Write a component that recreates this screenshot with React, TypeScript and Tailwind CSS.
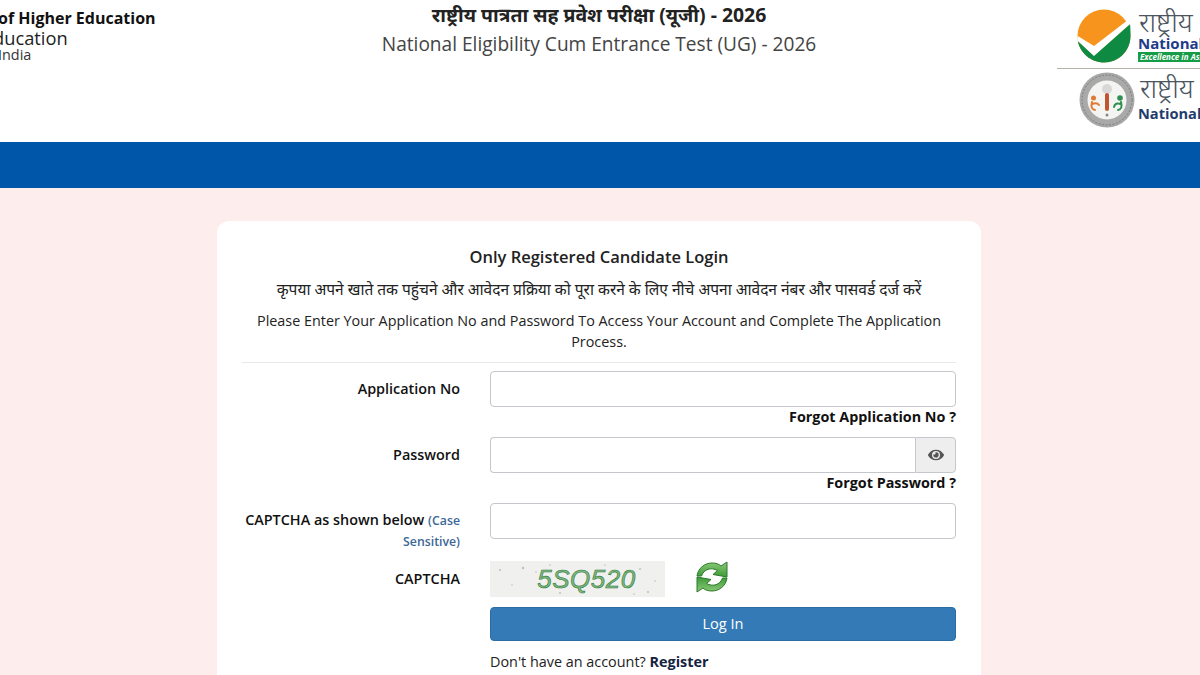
import React from "react";
import { FaEye } from "react-icons/fa";

const font = { fontFamily: '"Open Sans", "Noto Sans", "Noto Sans Devanagari", "Lohit Devanagari", sans-serif' };

function NtaLogo() {
  return (
    <svg width="54" height="54" viewBox="0 0 54 54" className="shrink-0">
      <circle cx="27" cy="27" r="26.5" fill="#f7941d" />
      <path d="M0.8 32 L17 46.500 L53 15 C53.500 18 53.500 24 53.500 27 C53.500 41.500 42 53.500 27 53.500 C14 53.500 3 44 0.800 32 Z" fill="#0e8a43" />
      <path d="M0.800 27 L17 37 L51.500 10.500 L53 15 L17 47 L0.800 32 Z" fill="#fff" />
    </svg>
  );
}

function NmcLogo() {
  return (
    <svg width="56" height="56" viewBox="0 0 56 56" className="shrink-0">
      <circle cx="28" cy="28" r="27.5" fill="#a9a9a9" />
      <circle cx="28" cy="28" r="25" fill="none" stroke="#7c7c7c" strokeWidth="1" strokeDasharray="2 1.500" />
      <circle cx="28" cy="28" r="19.500" fill="#f4f4f2" />
      <circle cx="28" cy="17" r="5" fill="#d8d8d8" />
      <path d="M28 23 v14" stroke="#c2552f" strokeWidth="4" strokeLinecap="round" />
      <circle cx="14.500" cy="26" r="2.500" fill="#e07a30" />
      <path d="M13 30 q-2 7 3 8 M13 32 q5-2 7 1" fill="none" stroke="#e07a30" strokeWidth="2" strokeLinecap="round" />
      <circle cx="41" cy="26" r="2.800" fill="#2f8f4e" />
      <path d="M42 30 q2 7-3 8 M42 32 q-6-2-7 3" fill="none" stroke="#2f8f4e" strokeWidth="2" strokeLinecap="round" />
      <circle cx="28" cy="43" r="1.500" fill="#888" />
    </svg>
  );
}

function Refresh() {
  const arrow = "M2 15 C3 7 10 2 17 2 C21 2 24 3 26 5 L32 1 L32 16 L18 13.500 L22.500 9.500 C16 6 9 8 6.500 15 Z";
  return (
    <svg width="34" height="32" viewBox="0 0 34 32">
      <defs>
        <linearGradient id="refreshGreen" x1="0" y1="0" x2="0" y2="1">
          <stop offset="0" stopColor="#8cc97a" />
          <stop offset="1" stopColor="#3c9a35" />
        </linearGradient>
      </defs>
      <path d={arrow} fill="url(#refreshGreen)" stroke="#2a7a2a" strokeWidth="1" strokeLinejoin="round" />
      <path d={arrow} transform="rotate(180 17 16)" fill="url(#refreshGreen)" stroke="#2a7a2a" strokeWidth="1" strokeLinejoin="round" />
    </svg>
  );
}

function Row({ label, children, small }: { label: React.ReactNode; children: React.ReactNode; small?: boolean }) {
  return (
    <div className="flex">
      <div className={`w-[218px] shrink-0 pt-[7px] text-right text-[14.4px] font-semibold text-[#111] ${small ? "leading-[20px]" : "leading-[21px]"}`}>{label}</div>
      <div className="ml-[30px] flex-1">{children}</div>
    </div>
  );
}

const inputCls = "block h-[36px] w-full rounded-[4px] border border-[#c4c7cb] bg-white";

export default function App() {
  return (
    <div style={font} className="h-[675px] w-[1200px] overflow-hidden bg-[#fdeded]">
      <header className="flex h-[142px] bg-white">
        <div className="w-[155px] shrink-0 whitespace-nowrap pt-[8px]">
          <div className="-ml-[2px] text-[16px] font-bold leading-[20px] text-[#111]">of Higher Education</div>
          <div className="-ml-[7px] text-[18.3px] leading-[19px] text-[#222]">ducation</div>
          <div className="-ml-[2px] text-[14.4px] leading-[16px] text-[#333]">India</div>
        </div>
        <div className="flex-1 pt-px text-center">
          <div className="pr-[14px] text-[19.4px] font-bold leading-[28px] text-[#222]">राष्ट्रीय पात्रता सह प्रवेश परीक्षा (यूजी) - 2026</div>
          <div className="pr-[14px] text-[19.1px] leading-[30px] text-[#444]">National Eligibility Cum Entrance Test (UG) - 2026</div>
        </div>
        <div className="w-[143px] shrink-0 overflow-hidden">
          <div className="flex h-[69px] w-[200px] items-start gap-[7px] border-b border-[#b5b0aa] pl-[20px] pt-[9px]">
            <NtaLogo />
            <div className="whitespace-nowrap">
              <div className="pl-[1px] text-[27px] font-light leading-[25px] text-[#4a5560]">राष्ट्रीय</div>
              <div className="text-[15px] font-bold leading-[18px] text-[#1f3c88]">National Testing</div>
              <div className="h-[10px] bg-[#169b46] pl-[2px] text-[8px] font-bold italic leading-[10px] text-white">Excellence in Assessment</div>
            </div>
          </div>
          <div className="flex w-[200px] items-start gap-[3px] pl-[22px] pt-[3px]">
            <NmcLogo />
            <div className="whitespace-nowrap">
              <div className="pl-[2px] pt-[1px] text-[27px] font-light leading-[29px] text-[#4a5560]">राष्ट्रीय</div>
              <div className="pt-[2px] text-[14.6px] font-bold leading-[18px] text-[#1f3c6e]">National Medical</div>
            </div>
          </div>
        </div>
      </header>
      <div className="h-[46px] bg-[#0056a8]" />
      <main className="flex justify-center pt-[33px]">
        <section className="-ml-[2px] h-[600px] w-[764px] rounded-[12px] bg-white px-[25px] pt-[24px]">
          <h1 className="text-center text-[16.5px] font-semibold leading-[24px] text-[#222]">Only Registered Candidate Login</h1>
          <p className="pt-[8px] text-center text-[15.5px] leading-[24px] text-[#222]">कृपया अपने खाते तक पहुंचने और आवेदन प्रक्रिया को पूरा करने के लिए नीचे अपना आवेदन नंबर और पासवर्ड दर्ज करें</p>
          <p className="px-[10px] pt-[9px] text-center text-[14.36px] leading-[21px] text-[#222]">Please Enter Your Application No and Password To Access Your Account and Complete The Application Process.</p>
          <hr className="mt-[10px] border-t border-[#e8e8e8]" />
          <div className="pt-[8px]">
            <Row label="Application No">
              <input className={inputCls} aria-label="Application No" />
              <div className="h-[30px] text-right text-[14.36px] font-bold leading-[20px] text-[#111]">Forgot Application No ?</div>
            </Row>
            <Row label="Password">
              <div className="flex h-[36px]">
                <input className="h-[36px] min-w-0 flex-1 rounded-l-[4px] border border-r-0 border-[#c4c7cb] bg-white" aria-label="Password" />
                <div className="flex w-[41px] items-center justify-center rounded-r-[4px] border border-[#c4c7cb] bg-[#eeeeee]">
                  <FaEye className="h-[16px] w-[16px] text-[#555]" />
                </div>
              </div>
              <div className="h-[30px] text-right text-[14.36px] font-bold leading-[20px] text-[#111]">Forgot Password ?</div>
            </Row>
            <Row label={<>CAPTCHA as shown below <span className="text-[12.3px] text-[#3c6796]">(Case Sensitive)</span></>} small>
              <div className="pb-[22px]">
                <input className={inputCls} aria-label="CAPTCHA" />
              </div>
            </Row>
            <Row label="CAPTCHA">
              <div className="flex items-start">
                <div className="relative flex h-[36px] w-[175px] items-center justify-center overflow-hidden bg-[#f0f0ee]">
                  <svg className="absolute inset-0" width="175" height="36" viewBox="0 0 175 36">
                    <g fill="#b9c2b6">
                      <circle cx="10" cy="9" r="1" /><circle cx="33" cy="7" r="1.200" /><circle cx="46" cy="11" r="0.800" /><circle cx="22" cy="24" r="0.800" />
                      <circle cx="70" cy="32" r="1" /><circle cx="150" cy="8" r="0.900" /><circle cx="158" cy="31" r="1.100" /><circle cx="144" cy="33" r="0.800" />
                      <circle cx="115" cy="4" r="0.800" /><circle cx="60" cy="4" r="0.800" /><circle cx="165" cy="20" r="0.800" />
                    </g>
                  </svg>
                  <span style={{ fontFamily: '"Liberation Sans", sans-serif' }} className="relative pl-[18px] text-[26px] font-normal italic tracking-[0.5px] text-[#7fb781] [-webkit-text-stroke:0.6px_#2f7a3a]">5SQ520</span>
                </div>
                <div className="ml-[30px]"><Refresh /></div>
              </div>
              <button className="mt-[10px] block h-[34px] w-full rounded-[4px] border border-[#2e6da4] bg-[#337ab7] text-[14.6px] text-white">Log In</button>
              <div className="pt-[11px] text-[14.4px] leading-[20px] text-[#222]">Don't have an account? <b className="font-bold text-[#14233f]">Register</b></div>
            </Row>
          </div>
        </section>
      </main>
    </div>
  );
}
